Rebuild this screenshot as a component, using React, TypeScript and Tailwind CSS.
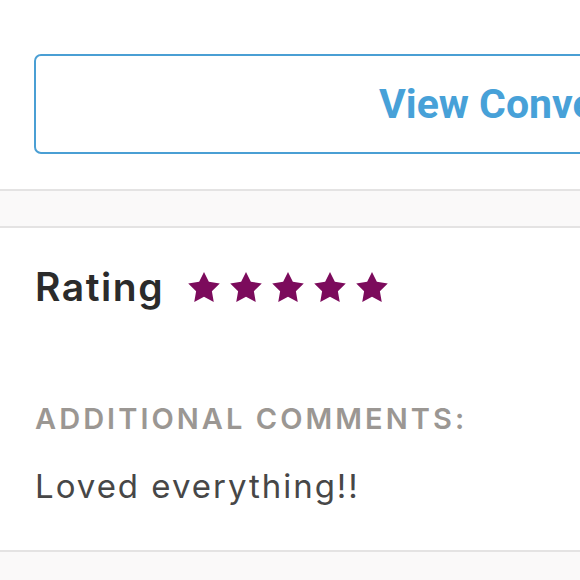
import React from "react";

function Star() {
  return (
    <svg width="32" height="30" viewBox="2 2 20 19.02" className="shrink-0">
      <polygon
        points="12,2 15.09,8.26 22,9.27 17,14.14 18.18,21.02 12,17.77 5.82,21.02 7,14.14 2,9.27 8.91,8.26"
        fill="#7c0b5c"
      />
    </svg>
  );
}

export default function App() {
  return (
    <div className="w-[580px] h-[580px] overflow-hidden bg-[#faf9f9] flex flex-col">
      <div className="bg-white pt-[54px] pb-[35px] pl-[34px]">
        <div className="w-[1012px] h-[100px] border-2 border-[#4a9fd4] rounded-[7px] flex items-center pl-[343px]">
          <span
            className="text-[41px] leading-none font-bold text-[#47a1d8] whitespace-nowrap"
            style={{ fontFamily: "Roboto, sans-serif" }}
          >
            View Conversation
          </span>
        </div>
      </div>
      <div className="h-[39px] border-y-2 border-[#e4e3e3] bg-[#faf9f9]" />
      <div
        className="bg-white pt-[39px] pb-[47px] pl-[35px] border-b-2 border-[#e4e3e3]"
        style={{ fontFamily: "Inter, sans-serif" }}
      >
        <div className="flex items-center">
          <span className="text-[39px] leading-[39px] font-semibold tracking-[0.04em] text-[#2b2b2b]">Rating</span>
          <div className="flex items-center gap-[10px] ml-[24px]">
            <Star />
            <Star />
            <Star />
            <Star />
            <Star />
          </div>
        </div>
        <div className="mt-[98px] text-[29px] leading-[29px] font-semibold tracking-[0.105em] text-[#9b9793] whitespace-nowrap">
          ADDITIONAL COMMENTS:
        </div>
        <div className="mt-[37px] text-[33px] leading-[33px] tracking-[0.06em] text-[#474747] whitespace-nowrap">
          Loved everything!!
        </div>
      </div>
    </div>
  );
}
